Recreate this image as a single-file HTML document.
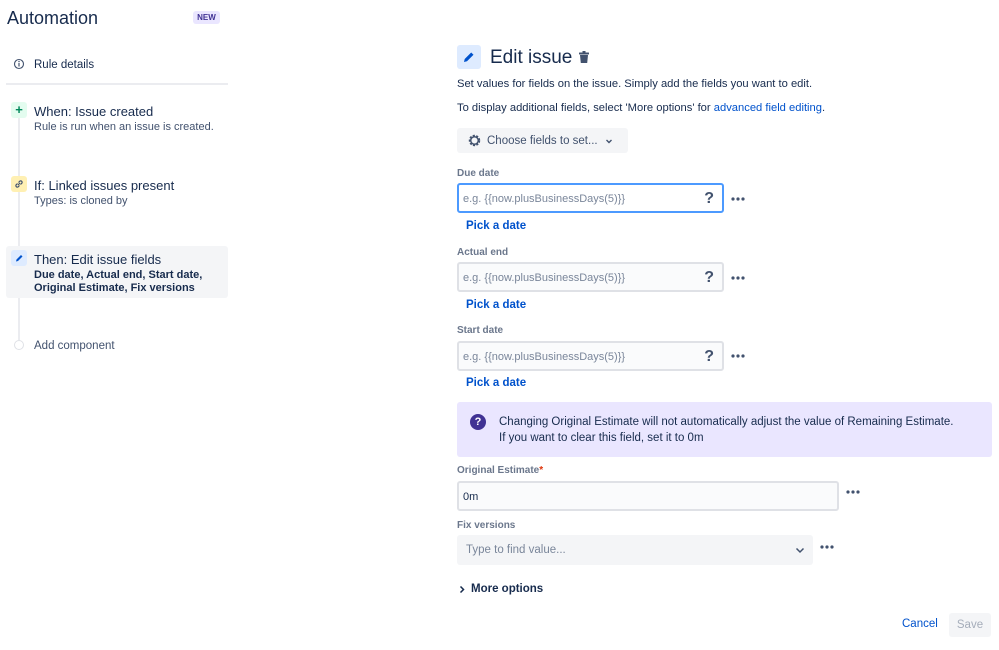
<!DOCTYPE html>
<html><head><meta charset="utf-8"><style>
*{margin:0;padding:0;box-sizing:border-box}
body{width:999px;height:650px;background:#fff;font-family:"Liberation Sans",sans-serif;color:#172b4d;position:relative;overflow:hidden}
.a{position:absolute;white-space:nowrap}
.lbl{font-size:10px;font-weight:bold;color:#6b778c}
.inp{position:absolute;border:2px solid #dfe1e6;background:#fafbfc;border-radius:3px;height:30px}
.ph{position:absolute;left:4px;top:8px;font-size:11px;color:#7a869a}
.q{position:absolute;right:8px;top:5px;font-size:16px;font-weight:bold;color:#42526e}
.pick{font-size:11.5px;font-weight:bold;color:#0052cc}
</style></head><body>
<svg width="0" height="0" style="position:absolute"><defs><g id="d"><circle cx="2" cy="2" r="1.6" fill="#42526e"/><circle cx="7" cy="2" r="1.6" fill="#42526e"/><circle cx="12" cy="2" r="1.6" fill="#42526e"/></g></defs></svg>
<div class="a" style="left:7px;top:8px;font-size:18px;">Automation</div>
<div class="a" style="left:193px;top:11px;width:27px;height:13px;background:#eae6ff;border-radius:3px;font-size:8px;font-weight:bold;color:#403294;text-align:center;line-height:13px">NEW</div>

<svg class="a" style="left:13px;top:58px" width="12" height="12" viewBox="0 0 12 12"><circle cx="6" cy="6" r="4.5" fill="none" stroke="#42526e" stroke-width="1.1"/><rect x="5.4" y="5" width="1.2" height="3.5" fill="#42526e"/><circle cx="6" cy="3.6" r=".7" fill="#42526e"/></svg>
<div class="a" style="left:34px;top:59px;font-size:11.5px">Rule details</div>
<div class="a" style="left:6px;top:83px;width:222px;height:2px;background:#ebecf0"></div>

<div class="a" style="left:18px;top:110px;width:2px;height:230px;background:#ebecf0"></div>
<div class="a" style="left:11px;top:102px;width:16px;height:16px;background:#e3fcef;border-radius:3px;color:#00875a;font-size:13px;font-weight:bold;text-align:center;line-height:15px">+</div>
<div class="a" style="left:34px;top:104px;font-size:13px">When: Issue created</div>
<div class="a" style="left:34px;top:121px;font-size:11px;color:#42526e">Rule is run when an issue is created.</div>

<div class="a" style="left:11px;top:176px;width:16px;height:16px;background:#fff0b3;border-radius:3px"></div>
<svg class="a" style="left:13px;top:178px" width="12" height="12" viewBox="0 0 12 12"><path d="M5 7l2-2M4.5 5.5L3 7a1.5 1.5 0 0 0 2 2l1.5-1.5M7.5 6.5L9 5a1.5 1.5 0 0 0-2-2L5.5 4.5" fill="none" stroke="#42526e" stroke-width="1.2"/></svg>
<div class="a" style="left:34px;top:178px;font-size:13px">If: Linked issues present</div>
<div class="a" style="left:34px;top:195px;font-size:11px;color:#42526e">Types: is cloned by</div>

<div class="a" style="left:6px;top:246px;width:222px;height:52px;background:#f4f5f7;border-radius:3px"></div>
<div class="a" style="left:11px;top:250px;width:16px;height:16px;background:#deebff;border-radius:3px"></div>
<svg class="a" style="left:13px;top:252px" width="12" height="12" viewBox="0 0 12 12"><path d="M3 9.5l.5-2 4.5-4.5 1.5 1.5-4.5 4.5z" fill="#0052cc"/></svg>
<div class="a" style="left:34px;top:252px;font-size:13px">Then: Edit issue fields</div>
<div class="a" style="left:34px;top:269px;font-size:11px;font-weight:bold;line-height:13px">Due date, Actual end, Start date,<br>Original Estimate, Fix versions</div>

<div class="a" style="left:14px;top:340px;width:10px;height:10px;border:1px solid #dfe1e6;border-radius:50%;background:#fff"></div>
<div class="a" style="left:34px;top:340px;font-size:11.5px;color:#42526e">Add component</div>

<div class="a" style="left:457px;top:45px;width:24px;height:24px;background:#deebff;border-radius:3px"></div>
<svg class="a" style="left:461px;top:49px" width="16" height="16" viewBox="0 0 16 16"><path d="M3 13l.7-3 6.5-6.5 2.3 2.3-6.5 6.5z" fill="#0052cc"/></svg>
<div class="a" style="left:490px;top:47px;font-size:19px">Edit issue</div>
<svg class="a" style="left:577px;top:50px" width="14" height="14" viewBox="0 0 14 14"><rect x="2" y="2.5" width="10" height="2" rx=".5" fill="#42526e"/><rect x="5.5" y="1" width="3" height="2" fill="#42526e"/><path d="M3 5h8l-.8 8H3.8z" fill="#42526e"/></svg>
<div class="a" style="left:457px;top:78px;font-size:11.2px">Set values for fields on the issue. Simply add the fields you want to edit.</div>
<div class="a" style="left:457px;top:102px;font-size:11.2px">To display additional fields, select 'More options' for <span style="color:#0052cc">advanced field editing</span>.</div>

<div class="a" style="left:457px;top:128px;width:171px;height:25px;background:#f4f5f7;border-radius:3px"></div>
<svg class="a" style="left:467px;top:133px" width="15" height="15" viewBox="0 0 16 16"><circle cx="8" cy="8" r="5" fill="none" stroke="#42526e" stroke-width="2.2" stroke-dasharray="2.2 1.4"/><circle cx="8" cy="8" r="4" fill="none" stroke="#42526e" stroke-width="1.5"/></svg>
<div class="a" style="left:487px;top:135px;font-size:11.5px;color:#42526e">Choose fields to set...</div>
<svg class="a" style="left:605px;top:137px" width="8" height="8" viewBox="0 0 8 8"><path d="M1.5 3l2.5 2.5L6.5 3" fill="none" stroke="#42526e" stroke-width="1.4"/></svg>

<div class="a lbl" style="left:457px;top:168px">Due date</div>
<div class="inp" style="left:457px;top:183px;width:267px;border-color:#4c9aff;background:#fff"><div class="ph">e.g. {{now.plusBusinessDays(5)}}</div><div class="q">?</div></div>
<svg class="a" style="left:731px;top:197px" width="14" height="4"><use href="#d"/></svg>
<div class="a pick" style="left:466px;top:220px">Pick a date</div>

<div class="a lbl" style="left:457px;top:247px">Actual end</div>
<div class="inp" style="left:457px;top:262px;width:267px"><div class="ph">e.g. {{now.plusBusinessDays(5)}}</div><div class="q">?</div></div>
<svg class="a" style="left:731px;top:276px" width="14" height="4"><use href="#d"/></svg>
<div class="a pick" style="left:466px;top:299px">Pick a date</div>

<div class="a lbl" style="left:457px;top:325px">Start date</div>
<div class="inp" style="left:457px;top:341px;width:267px"><div class="ph">e.g. {{now.plusBusinessDays(5)}}</div><div class="q">?</div></div>
<svg class="a" style="left:731px;top:354px" width="14" height="4"><use href="#d"/></svg>
<div class="a pick" style="left:466px;top:377px">Pick a date</div>

<div class="a" style="left:457px;top:402px;width:535px;height:55px;background:#eae6ff;border-radius:3px"></div>
<div class="a" style="left:470px;top:414px;width:16px;height:16px;border-radius:50%;background:#403294;color:#fff;font-size:11px;font-weight:bold;text-align:center;line-height:16px">?</div>
<div class="a" style="left:499px;top:414px;font-size:11.5px;line-height:16px">Changing Original Estimate will not automatically adjust the value of Remaining Estimate.<br>If you want to clear this field, set it to 0m</div>

<div class="a lbl" style="left:457px;top:465px">Original Estimate<span style="color:#de350b">*</span></div>
<div class="inp" style="left:457px;top:481px;width:382px"><div class="ph" style="color:#172b4d">0m</div></div>
<svg class="a" style="left:846px;top:490px" width="14" height="4"><use href="#d"/></svg>

<div class="a lbl" style="left:457px;top:520px">Fix versions</div>
<div class="a" style="left:457px;top:535px;width:356px;height:30px;background:#f4f5f7;border-radius:3px"></div>
<div class="a" style="left:466px;top:544px;font-size:11.5px;color:#7a869a">Type to find value...</div>
<svg class="a" style="left:795px;top:545px" width="10" height="10" viewBox="0 0 10 10"><path d="M1.5 3.5L5 7l3.5-3.5" fill="none" stroke="#42526e" stroke-width="1.5"/></svg>
<svg class="a" style="left:820px;top:545px" width="14" height="4"><use href="#d"/></svg>

<svg class="a" style="left:458px;top:585px" width="8" height="9" viewBox="0 0 8 9"><path d="M2.5 1.5l3 3-3 3" fill="none" stroke="#172b4d" stroke-width="1.5"/></svg>
<div class="a" style="left:471px;top:583px;font-size:11.5px;font-weight:bold">More options</div>

<div class="a" style="left:902px;top:618px;font-size:11.5px;color:#0052cc">Cancel</div>
<div class="a" style="left:949px;top:613px;width:42px;height:24px;background:#f4f5f7;border-radius:3px;font-size:11.5px;color:#a5adba;text-align:center;line-height:24px">Save</div>
</body></html>
